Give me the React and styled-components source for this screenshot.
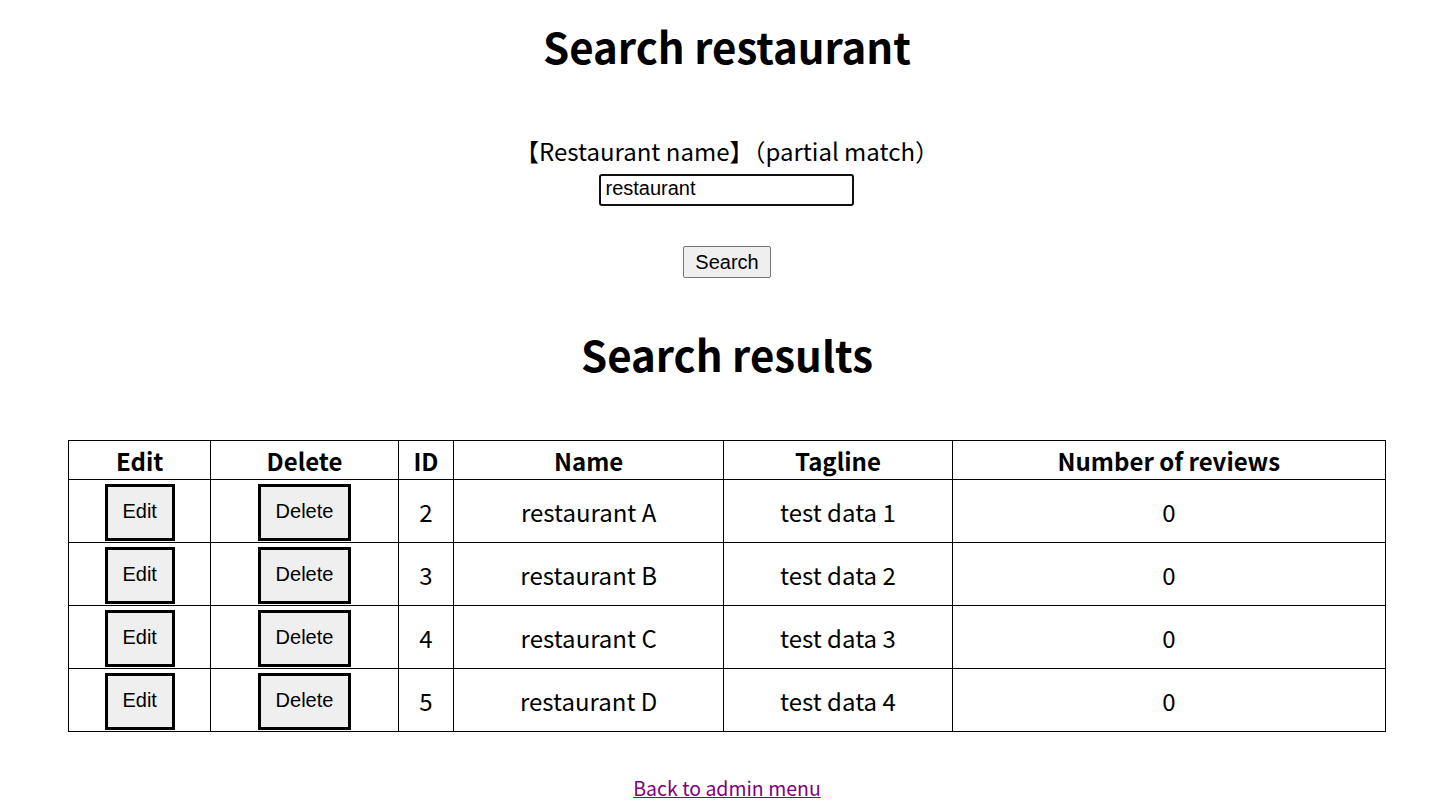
import React from "react";
import styled, { createGlobalStyle } from "styled-components";

const Global = createGlobalStyle`
  html, body { margin: 0; padding: 0; background: #fff; }
  body {
    font-family: "Noto Sans CJK JP", "Noto Sans", sans-serif;
    color: #000;
  }
`;

const Page = styled.div`
  display: flex;
  flex-direction: column;
  align-items: center;
  padding: 0 8px;
`;

const Title = styled.h1`
  font-size: 42px;
  font-weight: 700;
  line-height: 64px;
  margin: 14px 0 0;
  text-align: center;
`;

const Form = styled.form`
  display: flex;
  flex-direction: column;
  align-items: center;
  margin-top: 56px;
`;

const Label = styled.label`
  font-size: 24px;
  line-height: 34px;
`;

const Input = styled.input`
  box-sizing: border-box;
  width: 255px;
  height: 32px;
  border: 2px solid #101010;
  border-radius: 3px;
  padding: 0 4px 3px;
  font-family: "Liberation Sans", Arial, sans-serif;
  font-size: 20px;
  color: #000;
  outline: none;
  margin-top: 6px;
`;

const SearchButton = styled.button`
  box-sizing: border-box;
  margin-top: 40px;
  width: 88px;
  height: 32px;
  background: #efefef;
  border: 1px solid #767676;
  border-radius: 2px;
  font-family: "Liberation Sans", Arial, sans-serif;
  font-size: 20px;
  color: #000;
  padding: 0;
`;

const SubTitle = styled.h2`
  font-size: 42px;
  font-weight: 700;
  line-height: 64px;
  margin: 44px 0 0;
  text-align: center;
`;

const Table = styled.table`
  border-collapse: collapse;
  width: 1318px;
  margin-top: 54px;
  font-size: 24px;
`;

const Th = styled.th`
  border: 1px solid #000;
  height: 36px;
  padding: 2px 0 0;
  font-weight: 700;
  text-align: center;
  line-height: 30px;
  width: ${(p) => p.$w}px;
`;

const Td = styled.td`
  border: 1px solid #000;
  height: 60px;
  padding: 2px 0 0;
  text-align: center;
  line-height: 30px;
`;

const RowButton = styled.button`
  box-sizing: border-box;
  display: block;
  margin: 0 auto;
  width: ${(p) => p.$w}px;
  height: 57px;
  background: #efefef;
  border: 3px solid #000;
  border-radius: 0;
  font-family: "Liberation Sans", Arial, sans-serif;
  font-size: 20px;
  color: #000;
  padding: 0 0 2px;
`;

const BackLink = styled.a`
  margin-top: 42px;
  font-size: 19.5px;
  line-height: 28px;
  color: #800080;
  text-decoration: underline;
`;

const rows = [
  { id: 2, name: "restaurant A", tagline: "test data 1", reviews: 0 },
  { id: 3, name: "restaurant B", tagline: "test data 2", reviews: 0 },
  { id: 4, name: "restaurant C", tagline: "test data 3", reviews: 0 },
  { id: 5, name: "restaurant D", tagline: "test data 4", reviews: 0 },
];

export default function App() {
  return (
    <>
      <Global />
      <Page>
        <Title>Search restaurant</Title>
        <Form onSubmit={(e) => e.preventDefault()}>
          <Label htmlFor="name">【Restaurant name】（partial match）</Label>
          <Input id="name" defaultValue="restaurant" />
          <SearchButton type="submit">Search</SearchButton>
        </Form>
        <SubTitle>Search results</SubTitle>
        <Table>
          <thead>
            <tr>
              <Th $w={142}>Edit</Th>
              <Th $w={187}>Delete</Th>
              <Th $w={55}>ID</Th>
              <Th $w={270}>Name</Th>
              <Th $w={229}>Tagline</Th>
              <Th $w={435}>Number of reviews</Th>
            </tr>
          </thead>
          <tbody>
            {rows.map((r) => (
              <tr key={r.id}>
                <Td>
                  <RowButton $w={70}>Edit</RowButton>
                </Td>
                <Td>
                  <RowButton $w={93}>Delete</RowButton>
                </Td>
                <Td>{r.id}</Td>
                <Td>{r.name}</Td>
                <Td>{r.tagline}</Td>
                <Td>{r.reviews}</Td>
              </tr>
            ))}
          </tbody>
        </Table>
        <BackLink href="#">Back to admin menu</BackLink>
      </Page>
    </>
  );
}
